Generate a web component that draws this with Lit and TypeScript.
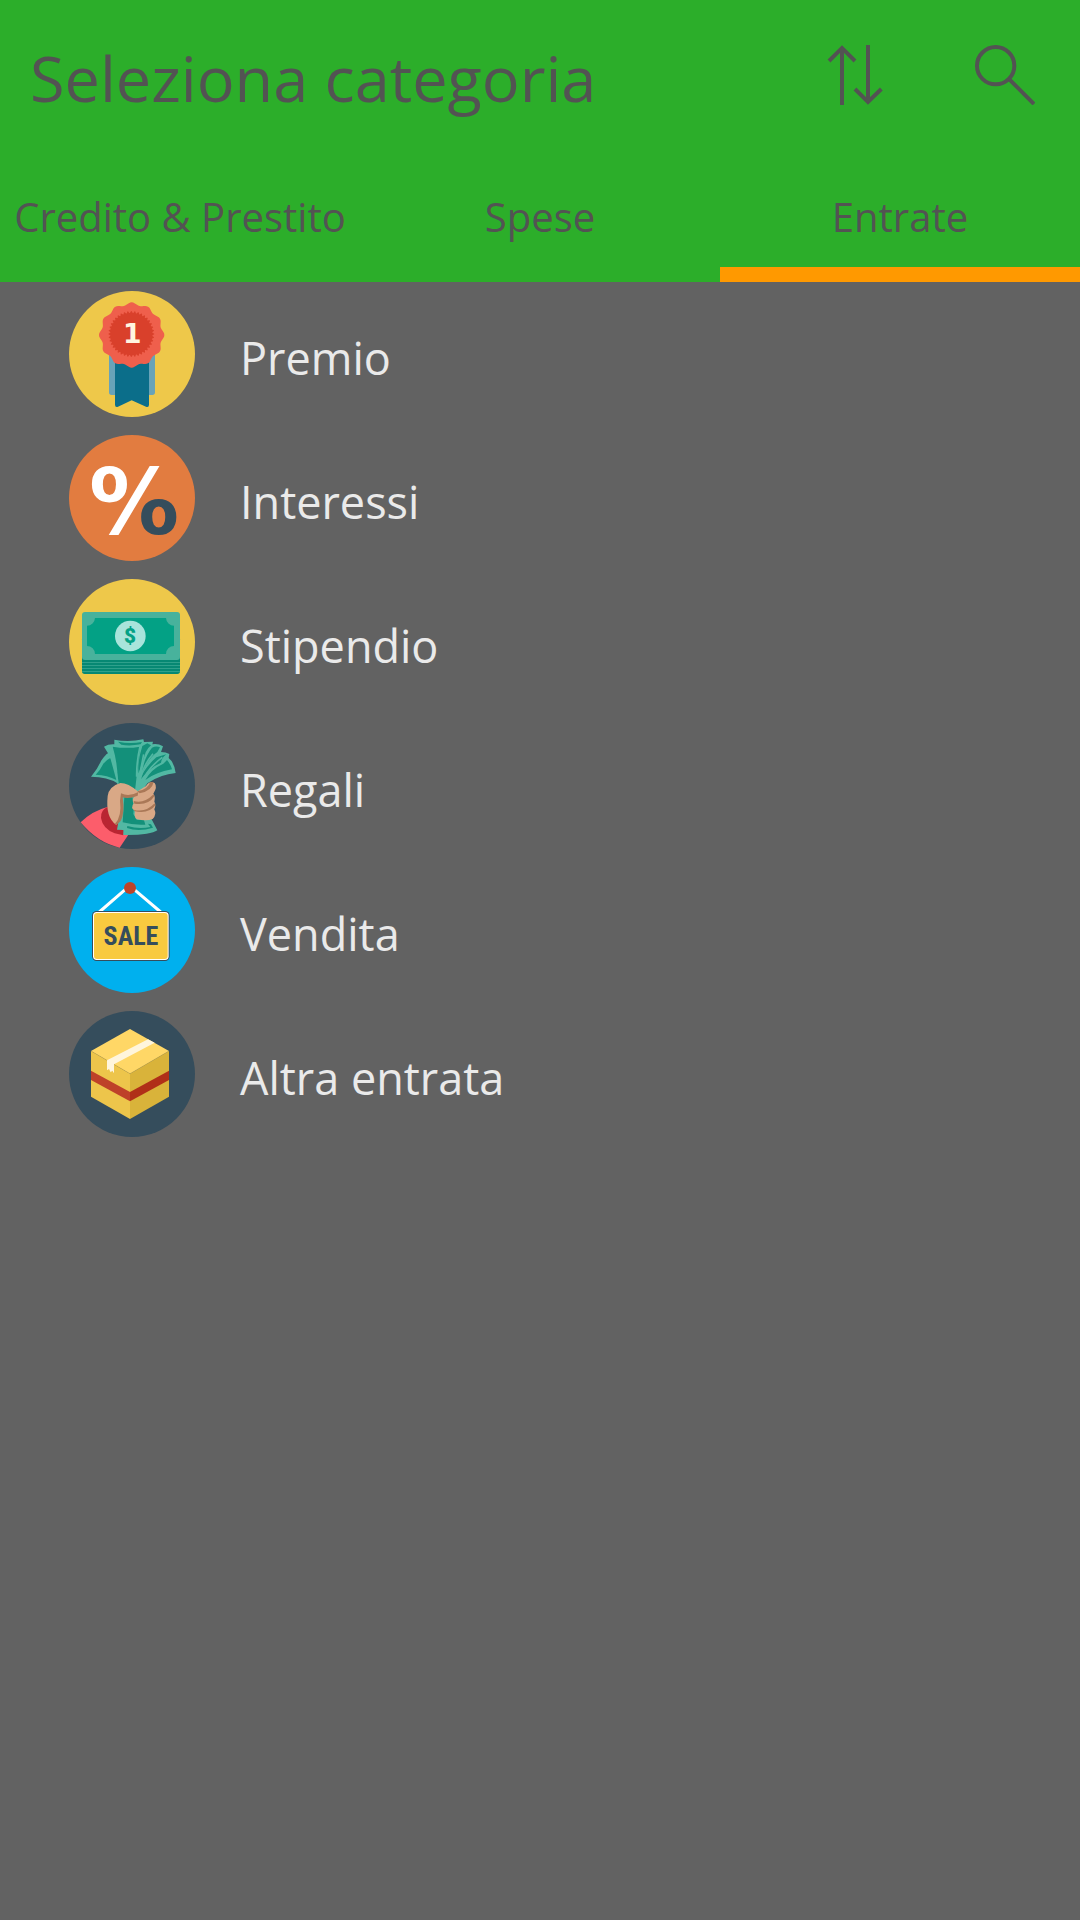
import { LitElement, html, css, svg, TemplateResult } from "lit";
import { customElement, state } from "lit/decorators.js";

/** Closed outline whose radius swings between two values, used for the rosette. */
function wavyRing(cx: number, cy: number, base: number, swing: number, waves: number): string {
  const steps = waves * 12;
  const points: string[] = [];
  for (let i = 0; i < steps; i++) {
    const angle = (i / steps) * Math.PI * 2;
    const radius = base + swing * Math.cos(angle * waves);
    const x = cx + radius * Math.sin(angle);
    const y = cy - radius * Math.cos(angle);
    points.push(`${x.toFixed(1)},${y.toFixed(1)}`);
  }
  return points.join(" ");
}

const award = svg`
  <circle cx="216" cy="216" r="189" fill="#eec84a"/>
  <path d="M147 200h30v134l-10 5h-12q-8 0-8-8zM285 200h-30v134l10 5h12q8 0 8-8z" fill="#68a3b8"/>
  <path d="M165 220h102v148q0 9-9 6l-43-19-41 19q-9 3-9-6z" fill="#0b6e8a"/>
  <polygon points=${wavyRing(215, 159, 94, 4, 12)} fill="#ef5f4c"/>
  <polygon points=${wavyRing(214, 156, 66, 3, 40)} fill="#d9402b"/>
  <text class="digit" x="217" y="184" text-anchor="middle" fill="#fff5e0">1</text>`;

const percent = svg`
  <defs>
    <linearGradient id="split" gradientUnits="userSpaceOnUse" x1="231" y1="270" x2="252" y2="282">
      <stop offset="0" stop-color="#ffffff"/>
      <stop offset="0" stop-color="#354d5c"/>
    </linearGradient>
  </defs>
  <circle cx="216" cy="216" r="189" fill="#e27c40"/>
  <text class="percent" x="222" y="324" text-anchor="middle" fill="url(#split)">%</text>`;

const cash = svg`
  <circle cx="216" cy="216" r="189" fill="#eec84a"/>
  <rect x="66" y="200" width="294" height="112" rx="8" fill="#078873"/>
  <path d="M66 277.500h294M66 286.500h294M66 295.500h294M66 304.500h294" stroke="#2fa08b" stroke-width="3"/>
  <rect x="66" y="126" width="294" height="144" rx="9" fill="#48b29c"/>
  <path d="M105 144H318A24 24 0 0 0 342 167V228A24 24 0 0 0 318 252H105A24 24 0 0 0 81 228V167A24 24 0 0 0 105 144Z" fill="#03a185"/>
  <circle cx="211" cy="198" r="46" fill="#a8e4db"/>
  <text class="dollar" x="210" y="220" text-anchor="middle" fill="#03a185">$</text>`;

const gift = svg`
  <circle cx="216" cy="216" r="189" fill="#354d5c"/>
  <path d="M62 325Q96 291 142 279L204 364 179 401Q112 386 62 325Z" fill="#fc5d6b"/>
  <path d="M142 279Q121 289 123 312Q128 344 164 358L190 364 196 330Z" fill="#b92532"/>
  <path d="M93 188Q113 165 123 141Q137 121 144 118L132 98Q145 90 163 91V77Q205 85 250 76L252 84 279 83 277 91Q294 88 309 97L303 114Q318 114 328 120L326 132Q343 146 347 177Q302 181 262 208L240 240 184 226 172 208Q143 188 93 188Z" fill="#52b8a3"/>
  <path d="M107 182Q121 168 130 149Q140 137 151 132L169 198Q143 183 107 182Z" fill="#13907a"/>
  <path d="M158 98Q200 105 240 98L225 230H188L173 207Q174 150 158 98Z" fill="#13907a"/>
  <path d="M174 83Q210 91 246 84L242 91Q208 97 184 92Z" fill="#13907a"/>
  <path d="M247 96L262 88 273 94Q263 102 257 115L236 178Q231 146 247 96Z" fill="#13907a"/>
  <path d="M276 101Q289 94 300 100L292 114Q264 133 246 179Q251 132 276 101Z" fill="#13907a"/>
  <path d="M239 200Q251 164 289 130L319 121Q304 132 303 146Q268 161 239 200ZM256 198Q274 165 310 149L321 138Q332 151 336 166Q286 175 256 198Z" fill="#13907a"/>
  <path d="M137 99Q148 96 158 99M148 119Q170 165 174 209M241 92Q229 145 230 188M251 121L235 204M279 119Q246 158 240 204M307 130Q262 163 245 207" fill="none" stroke="#52b8a3" stroke-width="5"/>
  <path d="M188 246H248L274 314 292 349Q272 364 190 363L190 348 171 347 176 318Z" fill="#52b8a3"/>
  <path d="M193 250H217L222 275 220 300 230 317 252 319 256 332Q219 334 188 325Z" fill="#13907a"/>
  <path d="M201 342Q235 354 279 341L273 331 264 329 271 339Q238 347 202 336Z" fill="#13907a"/>
  <path d="M143 246Q147 217 181 207Q205 207 233 232L258 216Q267 199 284 207Q293 219 280 239Q287 246 283 263Q289 272 283 286Q291 302 278 315Q261 322 231 316Q221 311 225 291Q210 282 221 268Q214 257 224 247L188 243Q186 302 178 320L169 333Q136 311 143 246Z" fill="#d9a886"/>
  <path d="M183 238Q207 250 235 234L233 245Q207 256 188 250Q195 298 182 321L169 333 165 329Q186 307 180 260ZM232 232Q265 226 270 205L281 204Q276 231 239 238ZM221 261Q250 271 281 241L283 247Q264 276 223 269ZM221 287Q257 297 284 268L286 274Q268 300 224 292Z" fill="#aa7857"/>`;

const sale = svg`
  <circle cx="216" cy="216" r="189" fill="#00b0ee"/>
  <path d="M118 162L209 83L302 162" fill="none" stroke="#ffffff" stroke-width="9"/>
  <circle cx="210" cy="90" r="18" fill="#be4329"/>
  <rect x="96" y="159" width="233" height="150" rx="14" fill="#354d5c"/>
  <rect x="99" y="162" width="227" height="144" rx="11" fill="#ffffff"/>
  <rect x="102" y="165" width="221" height="138" rx="9" fill="#f8ca3f"/>
  <text class="sale" x="213" y="261" text-anchor="middle" fill="#354d5c">SALE</text>`;

const box = svg`
  <circle cx="216" cy="216" r="189" fill="#354d5c"/>
  <path d="M93 147L210 215V351L93 284Z" fill="#edc54b"/>
  <path d="M327 147L210 215V351L327 284Z" fill="#d9b33a"/>
  <path d="M93 147L210 81L327 147L210 215Z" fill="#ffd766"/>
  <path d="M93 147L210 215L327 147" fill="none" stroke="#bd9c3a" stroke-width="1"/>
  <path d="M93 206L210 270V298L93 234Z" fill="#be4129"/>
  <path d="M327 206L210 270V298L327 234Z" fill="#b02f18"/>
  <path d="M141 175L264 112L284 122L162 187V214L157 206L152 211L147 201L141 205Z" fill="#fff5dc"/>`;

interface Category {
  name: string;
  icon: TemplateResult<2>;
}

const TABS = ["Credito & Prestito", "Spese", "Entrate"];

const INCOME: Category[] = [
  { name: "Premio", icon: award },
  { name: "Interessi", icon: percent },
  { name: "Stipendio", icon: cash },
  { name: "Regali", icon: gift },
  { name: "Vendita", icon: sale },
  { name: "Altra entrata", icon: box },
];

@customElement("app-root")
export class AppRoot extends LitElement {
  @state() private selected = 2;

  static styles = css`
    :host {
      display: flex;
      flex-direction: column;
      min-height: 100vh;
      background: #626262;
      color: #eaeaea;
      font-family: "Segoe UI", "Open Sans", "Noto Sans", sans-serif;
    }
    button {
      margin: 0;
      padding: 0;
      border: 0;
      background: none;
      color: inherit;
      font: inherit;
      cursor: pointer;
    }
    .header {
      background: #2cae2a;
      color: #535353;
    }
    .bar {
      display: flex;
      align-items: center;
      height: 150px;
      padding-left: 30px;
    }
    .title {
      flex: 1;
      margin: 0;
      padding-top: 6px;
      font-size: 63px;
      line-height: 88px;
      font-weight: 400;
      white-space: nowrap;
    }
    .action {
      display: grid;
      place-items: center;
      width: 150px;
      height: 150px;
    }
    .glyph {
      width: 60px;
      height: 60px;
      fill: none;
      stroke: currentColor;
      stroke-width: 12;
    }
    .tabs {
      display: grid;
      grid-template-columns: repeat(3, 1fr);
    }
    .tab {
      height: 132px;
      padding-top: 2px;
      border-top: 15px solid transparent;
      border-bottom: 15px solid transparent;
      font-size: 40px;
      line-height: 56px;
      white-space: nowrap;
    }
    .tab[aria-selected="true"] {
      border-bottom-color: #ff9900;
    }
    .list {
      margin: 0;
      padding: 0;
      list-style: none;
    }
    .row {
      display: flex;
      align-items: center;
      gap: 45px;
      width: 100%;
      height: 144px;
      padding-left: 69px;
      text-align: left;
    }
    .icon {
      flex: none;
      width: 126px;
      height: 126px;
      overflow: visible;
    }
    .name {
      padding-top: 8px;
      font-size: 45px;
      line-height: 64px;
    }
    .digit {
      font: 700 80px "DejaVu Sans", sans-serif;
    }
    .percent {
      font: 700 270px "DejaVu Sans", sans-serif;
    }
    .dollar {
      font: 900 62px Roboto, sans-serif;
    }
    .sale {
      font: 700 78px "Liberation Sans Narrow", "Roboto Condensed", Roboto, sans-serif;
    }
  `;

  render() {
    return html`
      <header class="header">
        <div class="bar">
          <h1 class="title">Seleziona categoria</h1>
          <button class="action" aria-label="Ordina">
            <svg class="glyph" viewBox="135 75 180 180" aria-hidden="true">
              <path d="M186 255V84M147 123L186 84L225 123M264 75V246M225 207L264 246L304 207" />
            </svg>
          </button>
          <button class="action" aria-label="Cerca">
            <svg class="glyph" viewBox="585 75 180 180" aria-hidden="true">
              <circle cx="647" cy="137" r="56" />
              <path d="M688 178L762 252" />
            </svg>
          </button>
        </div>
        <div class="tabs" role="tablist">
          ${TABS.map(
            (label, i) => html`<button
              class="tab"
              role="tab"
              aria-selected=${i === this.selected ? "true" : "false"}
              @click=${() => (this.selected = i)}
            >${label}</button>`
          )}
        </div>
      </header>
      <ul class="list">
        ${INCOME.map(
          (item) => html`<li>
            <button class="row">
              <svg class="icon" viewBox="27 27 378 378" aria-hidden="true">${item.icon}</svg>
              <span class="name">${item.name}</span>
            </button>
          </li>`
        )}
      </ul>
    `;
  }
}
